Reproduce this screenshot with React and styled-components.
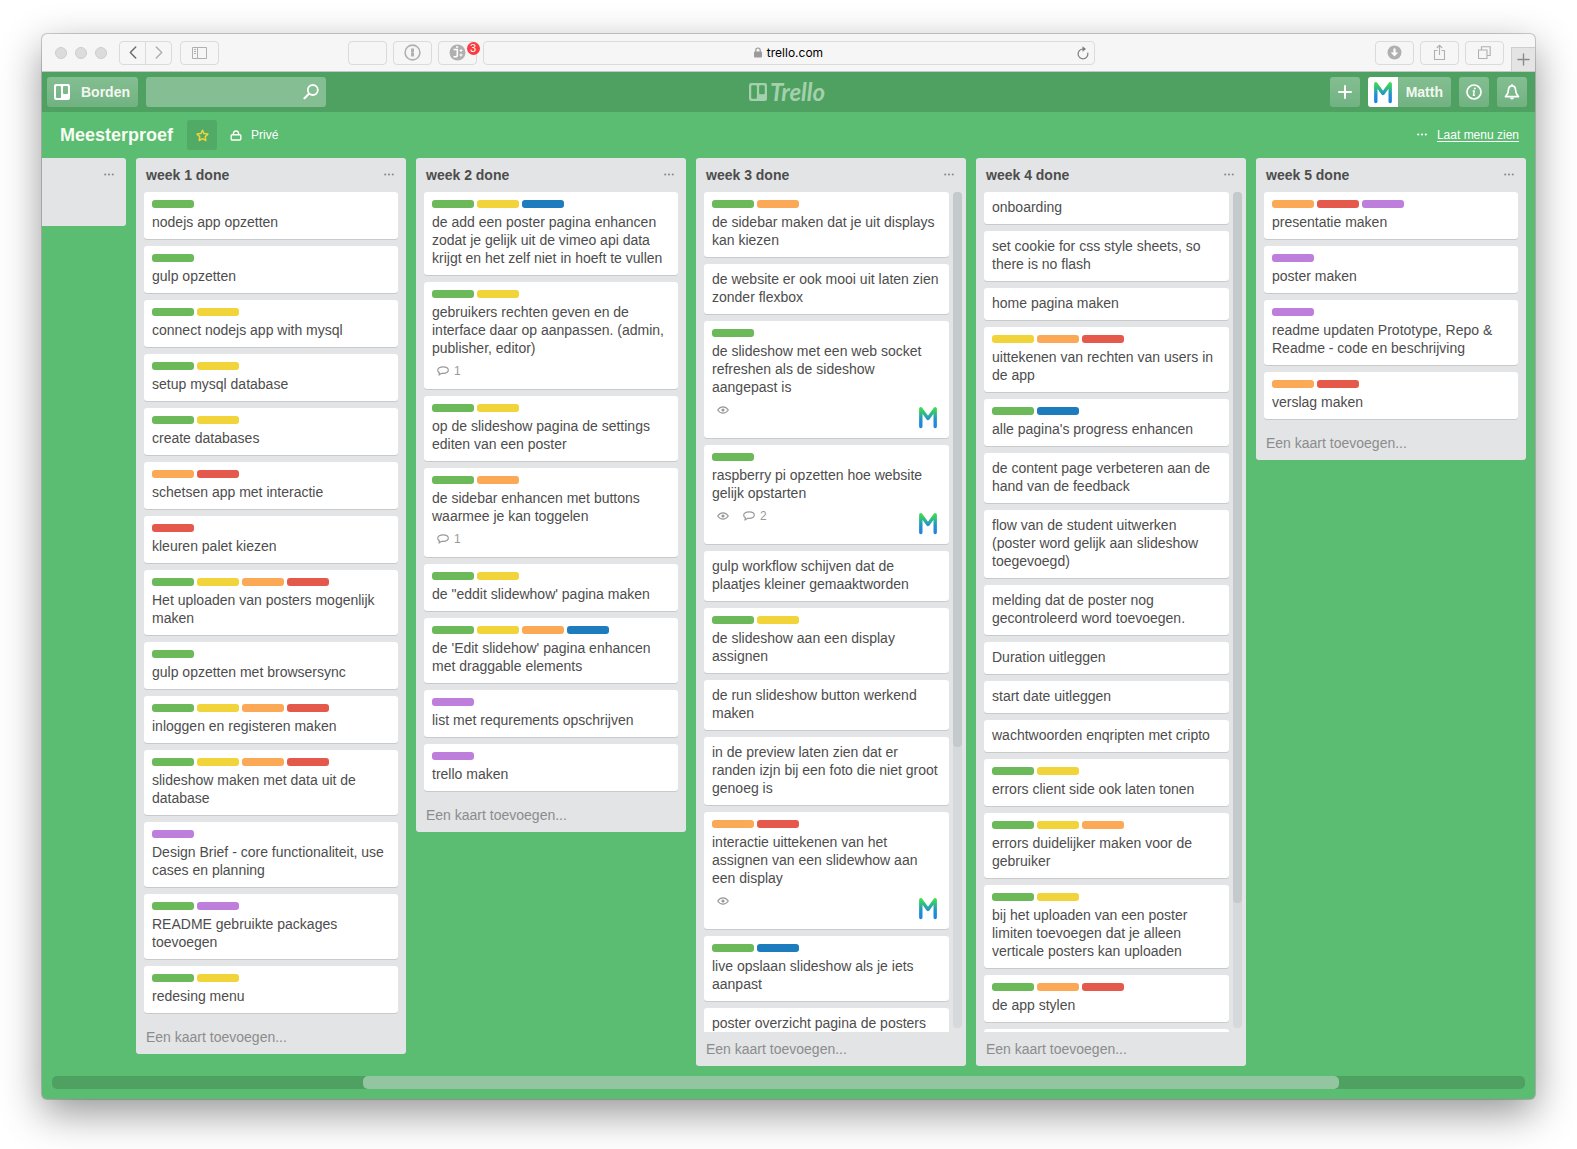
import React from "react";
import styled, { createGlobalStyle, css } from "styled-components";

const colors = {
  board: "#5abd71",
  header: "#4ea160",
  headerLight: "#84be92",
  list: "#e2e4e6",
  text: "#4d4d4d",
  muted: "#8c8c8c",
  chrome: "#f6f6f6",
  chromeLine: "#dbdbdb",
};

const labelColors = {
  green: "#6cb95a",
  yellow: "#f0d43a",
  orange: "#fba956",
  red: "#e4594b",
  purple: "#be7edc",
  blue: "#1d7cbd",
};

const GlobalStyle = createGlobalStyle`
  *, *::before, *::after { box-sizing: border-box; }
  body { margin: 0; background: #fff; color: ${colors.text}; }
  body, button, input {
    font-family: "Liberation Sans", Helvetica, Arial, sans-serif;
    font-size: 14px;
    line-height: 18px;
  }
  button { border: 0; margin: 0; padding: 0; background: none; color: inherit; cursor: pointer; }
  h1, h2, p, ul { margin: 0; padding: 0; }
  ul { list-style: none; }
  svg { display: block; flex: none; }
`;

const Desktop = styled.div`
  height: 100vh;
  padding: 34px 42px 50px;
  overflow: hidden;
`;

const BrowserWindow = styled.div`
  display: flex;
  flex-direction: column;
  height: 100%;
  overflow: hidden;
  border-radius: 5px;
  background: ${colors.board};
  box-shadow: 0 0 0 1px rgba(0, 0, 0, 0.18), 0 14px 40px rgba(0, 0, 0, 0.42);
`;

/* Browser toolbar */

const Chrome = styled.header`
  display: grid;
  grid-template-columns: 1fr minmax(0, 612px) 1fr;
  gap: 6px;
  flex: none;
  height: 38px;
  align-items: center;
  background: ${colors.chrome};
  border-bottom: 1px solid #c6c6c6;
`;

const ChromeSide = styled.div`
  display: flex;
  align-items: center;
  align-self: stretch;
  justify-content: ${(p) => (p.$end ? "flex-end" : "space-between")};
  padding-left: ${(p) => (p.$end ? "0" : "13px")};
`;

const ChromeGroup = styled.div`
  display: flex;
  align-items: center;
  gap: ${(p) => p.$gap || 6}px;
`;

const Light = styled.span`
  width: 12px;
  height: 12px;
  border-radius: 50%;
  background: #dcdcdc;
  border: 1px solid #cdcdcd;
`;

const Lights = styled.div`
  display: flex;
  gap: 8px;
  margin-right: 4px;
`;

const ChromeButton = styled.button`
  position: relative;
  display: flex;
  align-items: center;
  justify-content: center;
  width: 39px;
  height: 24px;
  border: 1px solid ${colors.chromeLine};
  border-radius: 4px;
  color: #b0b0b0;
`;

const NavPair = styled.div`
  display: flex;
  ${ChromeButton} {
    width: 27px;
  }
  ${ChromeButton}:first-child {
    border-radius: 4px 0 0 4px;
    color: #6f6f6f;
  }
  ${ChromeButton}:last-child {
    margin-left: -1px;
    border-radius: 0 4px 4px 0;
  }
`;

const Notice = styled.span`
  position: absolute;
  top: 0;
  right: -4px;
  min-width: 13px;
  height: 13px;
  border-radius: 7px;
  background: #fb3c3c;
  color: #fff;
  font-size: 11px;
  line-height: 13px;
  text-align: center;
`;

const AddressBar = styled.div`
  display: flex;
  align-items: center;
  height: 24px;
  padding: 0 5px 0 17px;
  border: 1px solid ${colors.chromeLine};
  border-radius: 4px;
`;

const Address = styled.span`
  display: flex;
  flex: 1;
  align-items: center;
  justify-content: center;
  gap: 5px;
  color: #000;
  font-family: Inter, "Liberation Sans", sans-serif;
  font-size: 12px;
  svg { color: #9b9b9b; }
`;

const ReloadButton = styled.button`
  color: #7b7b7b;
`;

const NewTab = styled.button`
  display: flex;
  align-items: center;
  justify-content: center;
  align-self: flex-end;
  width: 24px;
  height: 24px;
  margin-left: 7px;
  border: 1px solid #cdcdcd;
  border-width: 1px 0 0 1px;
  background: #e4e4e4;
  color: #8a8a8a;
`;

/* Application header */

const AppHeader = styled.header`
  display: grid;
  grid-template-columns: 1fr auto 1fr;
  flex: none;
  align-items: center;
  height: 40px;
  padding: 0 8px 0 5px;
  background: ${colors.header};
`;

const HeaderGroup = styled.div`
  display: flex;
  gap: 8px;
  justify-content: ${(p) => (p.$end ? "flex-end" : "flex-start")};
`;

const HeaderButton = styled.button`
  display: flex;
  align-items: center;
  justify-content: center;
  gap: ${(p) => p.$gap || 0}px;
  min-width: 30px;
  height: 30px;
  overflow: hidden;
  padding: ${(p) => p.$padding || "0"};
  border-radius: 3px;
  background: linear-gradient(${colors.headerLight}, #71b281);
  color: #fff;
  font-weight: bold;
  span { color: #f3f7f0; }
`;

const SearchBox = styled.label`
  display: flex;
  align-items: center;
  width: 180px;
  height: 30px;
  padding: 0 7px;
  border-radius: 3px;
  background: ${colors.headerLight};
  color: #fff;
`;

const SearchInput = styled.input`
  flex: 1;
  min-width: 0;
  border: 0;
  outline: 0;
  background: transparent;
  color: #fff;
`;

const Logo = styled.a`
  display: flex;
  align-items: center;
  gap: 3px;
  color: #a5d0ae;
  font-family: Lato, "Liberation Sans", sans-serif;
  font-size: 24px;
  font-style: italic;
  font-weight: 700;
  line-height: 30px;
  text-decoration: none;
`;

const AvatarFrame = styled.span`
  width: 30px;
  height: 30px;
  flex: none;
  background: #fff;
`;

/* Board header */

const BoardBar = styled.div`
  display: flex;
  flex: none;
  align-items: center;
  height: 46px;
  padding: 0 16px 0 18px;
  color: #fff;
  font-size: 12px;
`;

const BoardTitle = styled.h1`
  margin-right: 14px;
  font-size: 18px;
  line-height: 24px;
  color: #f7fbf3;
`;

const StarButton = styled.button`
  display: grid;
  place-items: center;
  width: 30px;
  height: 30px;
  border-radius: 3px;
  background: #51aa65;
  color: #f0d43a;
`;

const Visibility = styled.button`
  display: flex;
  align-items: center;
  gap: 9px;
  height: 30px;
  margin-left: 13px;
  font-size: 12px;
`;

const MenuToggle = styled.div`
  display: flex;
  align-items: center;
  gap: 10px;
  margin-left: auto;
  a { color: #fff; text-decoration: underline; text-underline-offset: 2px; }
`;

/* Lists */

const Lists = styled.main`
  display: flex;
  flex: 1;
  gap: 10px;
  min-height: 0;
  align-items: flex-start;
  overflow: hidden;
`;

const ListBox = styled.section`
  display: flex;
  flex: none;
  flex-direction: column;
  width: 270px;
  max-height: 100%;
  border-radius: 3px;
  background: ${colors.list};
  ${(p) =>
    p.$scrolledOff &&
    css`
      min-height: 68px;
      margin-left: -186px;
    `}
`;

const ListHeader = styled.div`
  display: flex;
  flex: none;
  align-items: center;
  justify-content: space-between;
  height: 34px;
  padding: 0 12px 0 10px;
  color: #8c8c8c;
`;

const ListTitle = styled.h2`
  color: ${colors.text};
  font-size: 14px;
`;

const ListBody = styled.div`
  display: flex;
  flex: 0 1 auto;
  min-height: 0;
  gap: 4px;
  padding: 0 ${(p) => (p.$scrolls ? 4 : 8)}px 0 8px;
`;

const Cards = styled.ul`
  flex: 1;
  min-width: 0;
  overflow: hidden;
`;

const ScrollTrack = styled.div`
  flex: none;
  width: 9px;
  margin-bottom: 4px;
  border-radius: 4px;
  background: #d5d9dc;
`;

const ScrollThumb = styled.div`
  border-radius: 4px;
  background: #c4c9cc;
`;

const CardBox = styled.li`
  display: flow-root;
  min-height: 32px;
  margin-bottom: 7px;
  padding: 6px 8px 8px;
  border-radius: 3px;
  background: #fff;
  box-shadow: 0 1px 0 #c8cacc;
`;

const Labels = styled.div`
  display: flex;
  gap: 3px;
  padding: 2px 0 5px;
`;

const Label = styled.span`
  width: 42px;
  height: 8px;
  border-radius: 3px;
  background: ${(p) => labelColors[p.$color]};
`;

const CardMeta = styled.div`
  display: flex;
  justify-content: space-between;
  margin: ${(p) => (p.$member ? "0 -2px -2px 0" : "0")};
  padding-top: ${(p) => (p.$member ? 6 : 4)}px;
`;

const Badges = styled.div`
  display: flex;
  gap: 14px;
  height: ${(p) => (p.$member ? 16 : 20)}px;
  padding-left: 5px;
  align-items: center;
  color: #999;
`;

const Badge = styled.span`
  display: flex;
  align-items: center;
  gap: 5px;
  font-size: 12px;
`;

const AddCard = styled.button`
  flex: none;
  height: 34px;
  padding: 0 10px;
  color: ${colors.muted};
  text-align: left;
`;

const BoardScroll = styled.div`
  flex: none;
  height: 13px;
  margin: 10px;
  padding-left: 20.8%;
  border-radius: 5px;
  background: ${colors.header};
`;

const BoardScrollThumb = styled.div`
  width: 84%;
  height: 13px;
  border-radius: 5px;
  background: #93c5a0;
`;

/* Icons */

const stroke = { fill: "none", stroke: "currentColor", strokeLinecap: "round", strokeLinejoin: "round" };

const Dots = () => (
  <svg width="10" height="4" viewBox="0 0 10 4" fill="currentColor" aria-hidden="true">
    <circle cx="1.2" cy="1.5" r="1.1" />
    <circle cx="5" cy="1.5" r="1.1" />
    <circle cx="8.8" cy="1.5" r="1.1" />
  </svg>
);

const BoardsIcon = ({ size = 16 }) => (
  <svg width={size} height={size} viewBox="0 0 16 16" aria-hidden="true">
    <path
      fill="currentColor"
      fillRule="evenodd"
      d="M2 0h12a2 2 0 0 1 2 2v12a2 2 0 0 1-2 2H2a2 2 0 0 1-2-2V2a2 2 0 0 1 2-2zM3 2a1 1 0 0 0-1 1v10a1 1 0 0 0 1 1h3a1 1 0 0 0 1-1V3a1 1 0 0 0-1-1zM10 2a1 1 0 0 0-1 1v6a1 1 0 0 0 1 1h3a1 1 0 0 0 1-1V3a1 1 0 0 0-1-1z"
    />
  </svg>
);

const SearchIcon = () => (
  <svg width="16" height="16" viewBox="0 0 16 16" aria-hidden="true">
    <g {...stroke} strokeWidth="1.8">
      <circle cx="9.8" cy="6" r="5" />
      <path d="M6 9.800 1.500 14.300" strokeWidth="2.2" />
    </g>
  </svg>
);

const Monogram = () => (
  <svg width="30" height="30" viewBox="0 0 30 30" aria-hidden="true">
    <defs>
      <linearGradient id="monogram" gradientUnits="userSpaceOnUse" x1="0" y1="5" x2="0" y2="26">
        <stop offset="0" stopColor="#3fe63c" />
        <stop offset="0.6" stopColor="#2290cf" />
        <stop offset="1" stopColor="#1c84e6" />
      </linearGradient>
    </defs>
    <path d="M7.800 24.500V6.800L15 16.500l7.200-9.700v17.700" fill="none" stroke="url(#monogram)" strokeWidth="3.4" strokeLinecap="round" strokeLinejoin="round" />
  </svg>
);

const PlusIcon = ({ size = 14, width = 2 }) => (
  <svg width={size} height={size} viewBox="0 0 14 14" aria-hidden="true">
    <path d="M7 1v12M1 7h12" {...stroke} strokeWidth={width} />
  </svg>
);

const InfoIcon = () => (
  <svg width="16" height="16" viewBox="0 0 16 16" aria-hidden="true">
    <g {...stroke} strokeWidth="1.7">
      <circle cx="8" cy="8" r="7" />
      <path d="M7.200 7h1.100l-.9 4.300h1" strokeWidth="1.4" />
    </g>
    <circle cx="8.800" cy="4.600" r="1" fill="currentColor" />
  </svg>
);

const BellIcon = () => (
  <svg width="16" height="16" viewBox="0 0 16 16" aria-hidden="true">
    <path d="M8 1.800C5.400 1.800 4.500 3.800 4.400 6.300c-.1 3-1 4.600-2.900 6.300h13c-1.900-1.700-2.800-3.300-2.900-6.300C11.500 3.800 10.600 1.800 8 1.800z" {...stroke} strokeWidth="1.700" />
    <path d="M6 13.500a2 2 0 0 0 4 0z" fill="currentColor" />
    <path d="M8 .9v1" {...stroke} strokeWidth="1.800" />
  </svg>
);

const StarIcon = () => (
  <svg width="13" height="13" viewBox="0 0 13 13" aria-hidden="true">
    <path d="M6.500 1.200 8.100 4.600l3.800.5-2.700 2.600.6 3.800-3.300-1.800-3.300 1.800.6-3.800L1.100 5.100l3.800-.5z" {...stroke} strokeWidth="1.500" />
  </svg>
);

const LockOutlineIcon = () => (
  <svg width="12" height="11" viewBox="0 0 12 11" aria-hidden="true">
    <g {...stroke} strokeWidth="1.400">
      <rect x="1.200" y="4.800" width="9.600" height="5.200" rx="1" />
      <path d="M3.300 4.600C3.300 2.300 4.200 1 6 1s2.700 1.300 2.700 3.600" />
    </g>
  </svg>
);

const PadlockIcon = () => (
  <svg width="8" height="11" viewBox="0 0 8 11" aria-hidden="true">
    <rect x="0" y="4.500" width="8" height="6" rx="1" fill="currentColor" />
    <path d="M1.800 5V3.200a2.200 2.200 0 0 1 4.400 0V5" fill="none" stroke="currentColor" strokeWidth="1.200" />
  </svg>
);

const ChevronIcon = ({ flip }) => (
  <svg width="8" height="13" viewBox="0 0 8 13" aria-hidden="true">
    <path d={flip ? "M1.300 1 6.700 6.500 1.300 12" : "M6.700 1 1.300 6.500 6.700 12"} {...stroke} strokeWidth="1.500" />
  </svg>
);

const SidebarIcon = () => (
  <svg width="15" height="12" viewBox="0 0 15 12" aria-hidden="true">
    <path d="M.5.5h14v11H.5zM5.500.5v11M2 2.500h2M2 4.500h2M2 6.500h2" fill="none" stroke="currentColor" />
  </svg>
);

const KeyholeIcon = () => (
  <svg width="17" height="17" viewBox="0 0 17 17" aria-hidden="true">
    <circle cx="8.500" cy="8.500" r="7.400" fill="none" stroke="currentColor" strokeWidth="1.600" />
    <path d="M7 4.500h3v3l-.7.9.7.7v3.400H7v-3l.7-.9L7 8z" fill="currentColor" />
  </svg>
);

const BlockerIcon = () => (
  <svg width="17" height="17" viewBox="0 0 17 17" aria-hidden="true">
    <circle cx="8.500" cy="8.500" r="8" fill="currentColor" />
    <path d="M4.500 5.500h3.800V11q0 1.800-1.800 1.800H4.500M7 3h2.200" fill="none" stroke="#fff" strokeWidth="1.600" />
    <path d="M10.500 6.500h3M12 5v3M10.500 11h3M12 9.500v3" stroke="#fff" strokeWidth="1" />
  </svg>
);

const DownloadIcon = () => (
  <svg width="15" height="15" viewBox="0 0 15 15" aria-hidden="true">
    <circle cx="7.500" cy="7.500" r="7" fill="currentColor" />
    <path d="M7.500 3.500v6" stroke="#fff" strokeWidth="2.200" />
    <path d="M3.800 7.500h7.400l-3.700 4z" fill="#fff" />
  </svg>
);

const ShareIcon = () => (
  <svg width="13" height="17" viewBox="0 0 13 17" aria-hidden="true">
    <path d="M4.500 6.500H1.500v9h10v-9h-3M6.500 11V1.500M3.800 4l2.700-2.700L9.200 4" fill="none" stroke="currentColor" strokeWidth="1.100" />
  </svg>
);

const TabsIcon = () => (
  <svg width="13" height="13" viewBox="0 0 13 13" aria-hidden="true">
    <path d="M.5 4h8.500v8.500H.5zM3.500 4V.8h8.700v8.700H9" fill="none" stroke="currentColor" strokeWidth="1.100" />
  </svg>
);

const ReloadIcon = () => (
  <svg width="12" height="14" viewBox="0 0 12 14" aria-hidden="true">
    <path d="M6 3A4.900 4.900 0 1 0 10.700 6.600" fill="none" stroke="currentColor" strokeWidth="1.200" />
    <path d="M5.500.2 9 3 5.500 5.800z" fill="currentColor" />
  </svg>
);

const EyeIcon = () => (
  <svg width="12" height="8" viewBox="0 0 12 8" aria-hidden="true">
    <path d="M.7 4C2.200 1.800 4 .8 6 .8S9.800 1.800 11.300 4C9.800 6.200 8 7.200 6 7.200S2.200 6.200.7 4z" {...stroke} strokeWidth="1.200" />
    <circle cx="6" cy="4" r="1.600" fill="currentColor" />
  </svg>
);

const CommentIcon = () => (
  <svg width="12" height="10" viewBox="0 0 12 10" aria-hidden="true">
    <path d="M2 9l.4-2.300C1.300 6.100.7 5.300.7 4.200.7 2 3 .8 6.200.8s5.100 1.200 5.100 3.300-2 3.300-5.100 3.300c-.6 0-1.100 0-1.600-.1z" {...stroke} strokeWidth="1.200" />
  </svg>
);

/* Data: g green, y yellow, o orange, r red, p purple, b blue */

const codes = { g: "green", y: "yellow", o: "orange", r: "red", p: "purple", b: "blue" };

const lists = [
  {
    title: "week 1 done",
    cards: [
      { l: "g", t: "nodejs app opzetten" },
      { l: "g", t: "gulp opzetten" },
      { l: "gy", t: "connect nodejs app with mysql" },
      { l: "gy", t: "setup mysql database" },
      { l: "gy", t: "create databases" },
      { l: "or", t: "schetsen app met interactie" },
      { l: "r", t: "kleuren palet kiezen" },
      { l: "gyor", t: "Het uploaden van posters mogenlijk maken" },
      { l: "g", t: "gulp opzetten met browsersync" },
      { l: "gyor", t: "inloggen en registeren maken" },
      { l: "gyor", t: "slideshow maken met data uit de database" },
      { l: "p", t: "Design Brief - core functionaliteit, use cases en planning" },
      { l: "gp", t: "README gebruikte packages toevoegen" },
      { l: "gy", t: "redesing menu" },
    ],
  },
  {
    title: "week 2 done",
    cards: [
      { l: "gyb", t: "de add een poster pagina enhancen zodat je gelijk uit de vimeo api data krijgt en het zelf niet in hoeft te vullen" },
      { l: "gy", t: "gebruikers rechten geven en de interface daar op aanpassen. (admin, publisher, editor)", comments: 1 },
      { l: "gy", t: "op de slideshow pagina de settings editen van een poster" },
      { l: "go", t: "de sidebar enhancen met buttons waarmee je kan toggelen", comments: 1 },
      { l: "gy", t: "de \"eddit slidewhow' pagina maken" },
      { l: "gyob", t: "de 'Edit slidehow' pagina enhancen met draggable elements" },
      { l: "p", t: "list met requrements opschrijven" },
      { l: "p", t: "trello maken" },
    ],
  },
  {
    title: "week 3 done",
    thumb: 66.4,
    cards: [
      { l: "go", t: "de sidebar maken dat je uit displays kan kiezen" },
      { t: "de website er ook mooi uit laten zien zonder flexbox" },
      { l: "g", t: "de slideshow met een web socket refreshen als de sideshow aangepast is", watched: true, member: true },
      { l: "g", t: "raspberry pi opzetten hoe website gelijk opstarten", watched: true, comments: 2, member: true },
      { t: "gulp workflow schijven dat de plaatjes kleiner gemaaktworden" },
      { l: "gy", t: "de slideshow aan een display assignen" },
      { t: "de run slideshow button werkend maken" },
      { t: "in de preview laten zien dat er randen izjn bij een foto die niet groot genoeg is" },
      { l: "or", t: "interactie uittekenen van het assignen van een slidewhow aan een display", watched: true, member: true },
      { l: "gb", t: "live opslaan slideshow als je iets aanpast" },
      { t: "poster overzicht pagina de posters" },
    ],
  },
  {
    title: "week 4 done",
    thumb: 85,
    cards: [
      { t: "onboarding" },
      { t: "set cookie for css style sheets, so there is no flash" },
      { t: "home pagina maken" },
      { l: "yor", t: "uittekenen van rechten van users in de app" },
      { l: "gb", t: "alle pagina's progress enhancen" },
      { t: "de content page verbeteren aan de hand van de feedback" },
      { t: "flow van de student uitwerken (poster word gelijk aan slideshow toegevoegd)" },
      { t: "melding dat de poster nog gecontroleerd word toevoegen." },
      { t: "Duration uitleggen" },
      { t: "start date uitleggen" },
      { t: "wachtwoorden enqripten met cripto" },
      { l: "gy", t: "errors client side ook laten tonen" },
      { l: "gyo", t: "errors duidelijker maken voor de gebruiker" },
      { l: "gy", t: "bij het uploaden van een poster limiten toevoegen dat je alleen verticale posters kan uploaden" },
      { l: "gor", t: "de app stylen" },
      { t: "" },
    ],
  },
  {
    title: "week 5 done",
    cards: [
      { l: "orp", t: "presentatie maken" },
      { l: "p", t: "poster maken" },
      { l: "p", t: "readme updaten Prototype, Repo & Readme - code en beschrijving" },
      { l: "or", t: "verslag maken" },
    ],
  },
];

function Card({ l = "", t, watched, comments, member }) {
  return (
    <CardBox>
      {l && (
        <Labels>
          {[...l].map((code) => (
            <Label key={code} $color={codes[code]} />
          ))}
        </Labels>
      )}
      <p>{t}</p>
      {(watched || comments) && (
        <CardMeta $member={member}>
          <Badges $member={member}>
            {watched && (
              <Badge>
                <EyeIcon />
              </Badge>
            )}
            {comments && (
              <Badge>
                <CommentIcon />
                {comments}
              </Badge>
            )}
          </Badges>
          {member && <Monogram />}
        </CardMeta>
      )}
    </CardBox>
  );
}

function List({ title, cards, thumb }) {
  return (
    <ListBox>
      <ListHeader>
        <ListTitle>{title}</ListTitle>
        <button type="button">
          <Dots />
        </button>
      </ListHeader>
      <ListBody $scrolls={Boolean(thumb)}>
        <Cards>
          {cards.map((card, i) => (
            <Card key={i} {...card} />
          ))}
        </Cards>
        {thumb && (
          <ScrollTrack>
            <ScrollThumb style={{ height: `${thumb}%` }} />
          </ScrollTrack>
        )}
      </ListBody>
      <AddCard type="button">Een kaart toevoegen...</AddCard>
    </ListBox>
  );
}

export default function App() {
  return (
    <Desktop>
      <GlobalStyle />
      <BrowserWindow>
        <Chrome>
          <ChromeSide>
            <ChromeGroup $gap={8}>
              <Lights>
                <Light />
                <Light />
                <Light />
              </Lights>
              <NavPair>
                <ChromeButton type="button"><ChevronIcon /></ChromeButton>
                <ChromeButton type="button"><ChevronIcon flip /></ChromeButton>
              </NavPair>
              <ChromeButton type="button"><SidebarIcon /></ChromeButton>
            </ChromeGroup>
            <ChromeGroup>
              <ChromeButton type="button" />
              <ChromeButton type="button"><KeyholeIcon /></ChromeButton>
              <ChromeButton type="button">
                <BlockerIcon />
                <Notice>3</Notice>
              </ChromeButton>
            </ChromeGroup>
          </ChromeSide>
          <AddressBar>
            <Address>
              <PadlockIcon />
              trello.com
            </Address>
            <ReloadButton type="button"><ReloadIcon /></ReloadButton>
          </AddressBar>
          <ChromeSide $end>
            <ChromeGroup>
              <ChromeButton type="button"><DownloadIcon /></ChromeButton>
              <ChromeButton type="button"><ShareIcon /></ChromeButton>
              <ChromeButton type="button"><TabsIcon /></ChromeButton>
            </ChromeGroup>
            <NewTab type="button"><PlusIcon size={13} width={1.5} /></NewTab>
          </ChromeSide>
        </Chrome>

        <AppHeader>
          <HeaderGroup>
            <HeaderButton type="button" $gap={11} $padding="0 8px 0 7px">
              <BoardsIcon />
              <span>Borden</span>
            </HeaderButton>
            <SearchBox>
              <SearchInput type="text" />
              <SearchIcon />
            </SearchBox>
          </HeaderGroup>
          <Logo href="#">
            <BoardsIcon size={18} />
            Trello
          </Logo>
          <HeaderGroup $end>
            <HeaderButton type="button"><PlusIcon /></HeaderButton>
            <HeaderButton type="button" $gap={8} $padding="0 8px 0 0">
              <AvatarFrame><Monogram /></AvatarFrame>
              <span>Matth</span>
            </HeaderButton>
            <HeaderButton type="button"><InfoIcon /></HeaderButton>
            <HeaderButton type="button"><BellIcon /></HeaderButton>
          </HeaderGroup>
        </AppHeader>

        <BoardBar>
          <BoardTitle>Meesterproef</BoardTitle>
          <StarButton type="button"><StarIcon /></StarButton>
          <Visibility type="button">
            <LockOutlineIcon />
            Privé
          </Visibility>
          <MenuToggle>
            <Dots />
            <a href="#">Laat menu zien</a>
          </MenuToggle>
        </BoardBar>

        <Lists>
          <ListBox $scrolledOff>
            <ListHeader>
              <span />
              <button type="button"><Dots /></button>
            </ListHeader>
          </ListBox>
          {lists.map((list) => (
            <List key={list.title} {...list} />
          ))}
        </Lists>

        <BoardScroll>
          <BoardScrollThumb />
        </BoardScroll>
      </BrowserWindow>
    </Desktop>
  );
}
